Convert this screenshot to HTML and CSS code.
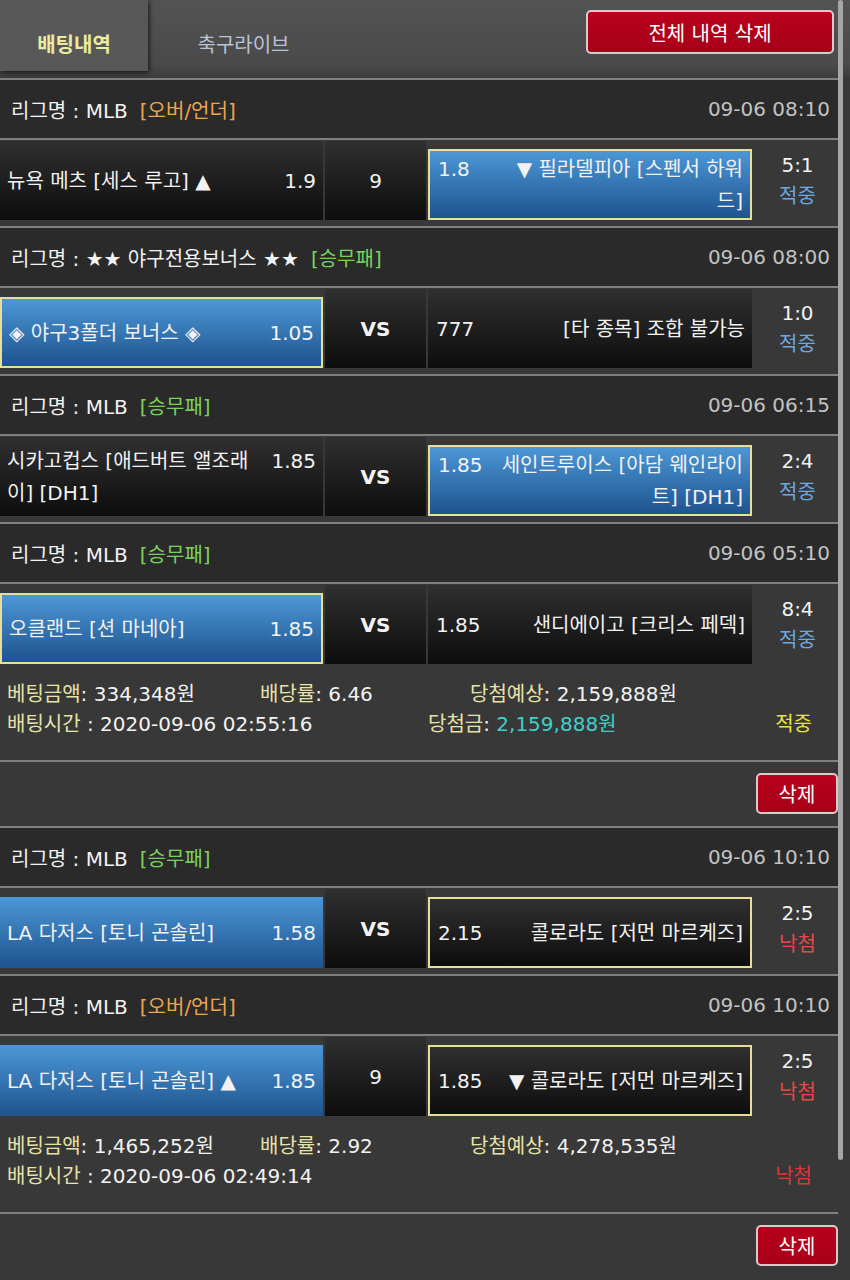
FILE: index.html
```html
<!DOCTYPE html>
<html lang="ko">
<head>
<meta charset="utf-8">
<title>배팅내역</title>
<link rel="stylesheet" href="styles.css">
</head>
<body>
<header class="top">
  <div class="tab tab-on">배팅내역</div>
  <div class="tab tab-off">축구라이브</div>
  <button class="btn btn-all">전체 내역 삭제</button>
</header>

<main class="list">
  <section class="bet">
    <div class="league"><span>리그명 : MLB</span><span class="ltype ou">[오버/언더]</span><span class="date">09-06 08:10</span></div>
    <div class="match">
      <div class="cell c-home"><div class="inner"><span class="team">뉴욕 메츠 [세스 루고] ▲</span><span class="odd">1.9</span></div></div>
      <div class="cell c-mid">9</div>
      <div class="cell c-away short blue pick"><div class="inner"><span class="odd">1.8</span><span class="team">▼ 필라델피아 [스펜서 하워드]</span></div></div>
      <div class="res"><span>5:1</span><span class="win">적중</span></div>
    </div>

    <div class="league"><span>리그명 : ★★ 야구전용보너스 ★★</span><span class="ltype wdl">[승무패]</span><span class="date">09-06 08:00</span></div>
    <div class="match">
      <div class="cell c-home short blue pick"><div class="inner"><span class="team">◈ 야구3폴더 보너스 ◈</span><span class="odd">1.05</span></div></div>
      <div class="cell c-mid vs">VS</div>
      <div class="cell c-away"><div class="inner"><span class="odd">777</span><span class="team">[타 종목] 조합 불가능</span></div></div>
      <div class="res"><span>1:0</span><span class="win">적중</span></div>
    </div>

    <div class="league"><span>리그명 : MLB</span><span class="ltype wdl">[승무패]</span><span class="date">09-06 06:15</span></div>
    <div class="match">
      <div class="cell c-home"><div class="inner"><span class="team">시카고컵스 [애드버트 앨조래이] [DH1]</span><span class="odd">1.85</span></div></div>
      <div class="cell c-mid vs">VS</div>
      <div class="cell c-away short blue pick"><div class="inner"><span class="odd">1.85</span><span class="team">세인트루이스 [아담 웨인라이트] [DH1]</span></div></div>
      <div class="res"><span>2:4</span><span class="win">적중</span></div>
    </div>

    <div class="league"><span>리그명 : MLB</span><span class="ltype wdl">[승무패]</span><span class="date">09-06 05:10</span></div>
    <div class="match">
      <div class="cell c-home short blue pick"><div class="inner"><span class="team">오클랜드 [션 마네아]</span><span class="odd">1.85</span></div></div>
      <div class="cell c-mid vs">VS</div>
      <div class="cell c-away"><div class="inner"><span class="odd">1.85</span><span class="team">샌디에이고 [크리스 페덱]</span></div></div>
      <div class="res"><span>8:4</span><span class="win">적중</span></div>
    </div>

    <div class="info">
      <div class="iline"><span class="w1"><span class="lb">베팅금액</span>: 334,348원</span><span class="w2"><span class="lb">배당률</span>: 6.46</span><span><span class="lb">당첨예상</span>: 2,159,888원</span></div>
      <div class="iline"><span class="w12"><span class="lb">배팅시간</span> : 2020-09-06 02:55:16</span><span><span class="lb">당첨금</span>: <span class="cy">2,159,888원</span></span><span class="state s-win">적중</span></div>
    </div>
    <div class="delrow"><button class="btn btn-del">삭제</button></div>
  </section>

  <section class="bet">
    <div class="league"><span>리그명 : MLB</span><span class="ltype wdl">[승무패]</span><span class="date">09-06 10:10</span></div>
    <div class="match">
      <div class="cell c-home short blue"><div class="inner"><span class="team">LA 다저스 [토니 곤솔린]</span><span class="odd">1.58</span></div></div>
      <div class="cell c-mid vs">VS</div>
      <div class="cell c-away short pick"><div class="inner"><span class="odd">2.15</span><span class="team">콜로라도 [저먼 마르케즈]</span></div></div>
      <div class="res"><span>2:5</span><span class="lose">낙첨</span></div>
    </div>

    <div class="league"><span>리그명 : MLB</span><span class="ltype ou">[오버/언더]</span><span class="date">09-06 10:10</span></div>
    <div class="match">
      <div class="cell c-home short blue"><div class="inner"><span class="team">LA 다저스 [토니 곤솔린] ▲</span><span class="odd">1.85</span></div></div>
      <div class="cell c-mid">9</div>
      <div class="cell c-away short pick"><div class="inner"><span class="odd">1.85</span><span class="team">▼ 콜로라도 [저먼 마르케즈]</span></div></div>
      <div class="res"><span>2:5</span><span class="lose">낙첨</span></div>
    </div>

    <div class="info">
      <div class="iline"><span class="w1"><span class="lb">베팅금액</span>: 1,465,252원</span><span class="w2"><span class="lb">배당률</span>: 2.92</span><span><span class="lb">당첨예상</span>: 4,278,535원</span></div>
      <div class="iline"><span class="w12"><span class="lb">배팅시간</span> : 2020-09-06 02:49:14</span><span class="state s-lose">낙첨</span></div>
    </div>
    <div class="delrow"><button class="btn btn-del">삭제</button></div>
  </section>
</main>

<div class="scroll"></div>
</body>
</html>
```

FILE: styles.css
```css
* { box-sizing: border-box; }
html, body { margin: 0; padding: 0; overflow: hidden; }
body {
  width: 850px;
  height: 1280px;
  position: relative;
  background: #383838;
  color: #f2f2f2;
  font-family: "DejaVu Sans", "Noto Sans CJK KR", sans-serif;
  font-size: 20px;
  letter-spacing: 0;
}

.top {
  display: flex;
  height: 78px;
  background: linear-gradient(#535353, #4a4a4a 82%, #3c3c3c);
}
.tab {
  height: 71px;
  display: flex;
  align-items: flex-end;
  justify-content: center;
  padding-bottom: 13px;
  line-height: 26px;
}
.tab-on {
  width: 148px;
  background: #585858;
  box-shadow: 1px 1px 5px rgba(0, 0, 0, 0.75);
  color: #ececa0;
  font-weight: bold;
}
.tab-off {
  width: 191px;
  color: #b9c3d6;
}
.btn {
  font-family: inherit;
  font-size: 20px;
  color: #ffffff;
  background: linear-gradient(#b8001d, #a80018);
  border: 2px solid #dccaca;
  border-radius: 5px;
  padding: 0;
}
.btn-all {
  margin: 10px 16px 0 auto;
  width: 248px;
  height: 44px;
}

.list { width: 838px; }

.league {
  height: 60px;
  border-top: 2px solid #808080;
  background: #2a2a2a;
  display: flex;
  align-items: center;
  padding: 0 8px 0 11px;
}
.ltype { margin-left: 12px; }
.ou { color: #eea64c; }
.wdl { color: #78d35c; }
.date { margin-left: auto; color: #c2c2c2; }

.match {
  border-top: 2px solid #808080;
  padding: 1px 0 6px;
  display: flex;
  align-items: flex-end;
}
.cell {
  height: 79px;
  display: flex;
  align-items: center;
  line-height: 32px;
  background: linear-gradient(#303030, #0d0d0d);
}
.c-home { width: 323px; margin-right: 2px; padding: 0 7px; }
.c-mid { width: 101px; margin-right: 2px; justify-content: center; }
.c-away { width: 324px; padding: 0 7px 0 8px; }
.vs { font-weight: bold; }
.short { height: 71px; }
.blue { background: linear-gradient(#4c97d7, #1e538e); }
.pick { border: 2px solid #e9de98; }

.inner {
  display: flex;
  align-items: baseline;
  justify-content: space-between;
  width: 100%;
}
.team { max-width: 247px; }
.c-away .team { text-align: right; }

.res {
  width: 86px;
  height: 79px;
  padding-left: 5px;
  display: flex;
  flex-direction: column;
  align-items: center;
  justify-content: center;
  line-height: 31px;
}
.win { color: #6aaae2; }
.lose { color: #e94848; }

.info { padding: 9px 26px 21px 7px; }
.iline { display: flex; height: 30px; line-height: 30px; }
.w1 { width: 253px; }
.w2 { width: 210px; }
.w12 { width: 421px; }
.lb { color: #e7e3a8; }
.cy { color: #3fd0c8; }
.state { margin-left: auto; }
.s-win { color: #e7e244; }
.s-lose { color: #e03434; }

.delrow {
  border-top: 2px solid #808080;
  height: 66px;
  display: flex;
  justify-content: flex-end;
  align-items: flex-start;
  padding-top: 11px;
}
.btn-del { width: 82px; height: 41px; }

.scroll {
  position: absolute;
  left: 838px;
  top: 0;
  width: 5px;
  height: 1160px;
  background: #a6a6a6;
  border-radius: 3px;
}
```
